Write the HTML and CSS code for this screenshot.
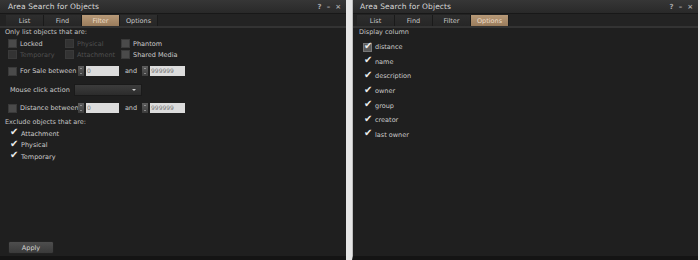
FILE: index.html
```html
<!DOCTYPE html>
<html lang="en">
<head>
    <meta charset="UTF-8">
    <title>Area Search for Objects</title>
    <link rel="stylesheet" href="styles.css">
</head>
<body>
    <div class="screens">
        <!-- Filter tab -->
        <div class="floater">
            <div class="titlebar">
                <span class="title">Area Search for Objects</span>
                <span class="tools"><span>?</span><span>&#8211;</span><span>&#215;</span></span>
            </div>
            <div class="tabs">
                <span class="tab">List</span>
                <span class="tab">Find</span>
                <span class="tab active">Filter</span>
                <span class="tab">Options</span>
            </div>
            <div class="body">
                <div class="label">Only list objects that are:</div>
                <div class="grid3">
                    <label class="cb"><i class="box"></i>Locked</label>
                    <label class="cb off"><i class="box"></i>Physical</label>
                    <label class="cb"><i class="box"></i>Phantom</label>
                    <label class="cb off"><i class="box"></i>Temporary</label>
                    <label class="cb off"><i class="box"></i>Attachment</label>
                    <label class="cb"><i class="box"></i>Shared Media</label>
                </div>
                <div class="range sale">
                    <label class="cb"><i class="box"></i>For Sale between</label>
                    <span class="spin"></span><span class="num">0</span>
                    <span class="and">and</span>
                    <span class="spin"></span><span class="num">999999</span>
                </div>
                <div class="combo-row">
                    <span>Mouse click action</span>
                    <span class="combo"></span>
                </div>
                <div class="range dist">
                    <label class="cb"><i class="box"></i>Distance between</label>
                    <span class="spin"></span><span class="num">0</span>
                    <span class="and">and</span>
                    <span class="spin"></span><span class="num">999999</span>
                </div>
                <div class="label">Exclude objects that are:</div>
                <div class="list">
                    <label class="cb"><i class="box on"></i>Attachment</label>
                    <label class="cb"><i class="box on"></i>Physical</label>
                    <label class="cb"><i class="box on"></i>Temporary</label>
                </div>
            </div>
            <div class="footer"><span class="btn">Apply</span></div>
        </div>

        <!-- Options tab -->
        <div class="floater right">
            <div class="titlebar">
                <span class="title">Area Search for Objects</span>
                <span class="tools"><span>?</span><span>&#8211;</span><span>&#215;</span></span>
            </div>
            <div class="tabs">
                <span class="tab">List</span>
                <span class="tab">Find</span>
                <span class="tab">Filter</span>
                <span class="tab active">Options</span>
            </div>
            <div class="body">
                <div class="label">Display column</div>
                <div class="columns">
                    <label class="cb"><i class="box on focus"></i>distance</label>
                    <label class="cb"><i class="box on"></i>name</label>
                    <label class="cb"><i class="box on"></i>description</label>
                    <label class="cb"><i class="box on"></i>owner</label>
                    <label class="cb"><i class="box on"></i>group</label>
                    <label class="cb"><i class="box on"></i>creator</label>
                    <label class="cb"><i class="box on"></i>last owner</label>
                </div>
            </div>
        </div>
    </div>
</body>
</html>
```

FILE: styles.css
```css
body {
    margin: 0;
    background: #e6e6e6;
    font-family: "DejaVu Sans", "Liberation Sans", sans-serif;
    font-size: 6.5px;
    color: #cccccc;
}

.screens {
    display: flex;
    gap: 6px;
    height: 260px;
}

.floater {
    width: 346px;
    height: 256px;
    background: #1f1f1f;
    border-bottom: 4px solid #141414;
    display: flex;
    flex-direction: column;
    position: relative;
}

.floater.right {
    width: 345px;
    border-left: 1px solid #bdbdbd;
}

.titlebar {
    height: 13px;
    display: flex;
    align-items: center;
    justify-content: space-between;
    padding: 0 5px 0 8px;
    background: linear-gradient(#363636, #292929);
    border-bottom: 1px solid #181818;
}

.right .titlebar {
    padding-left: 7px;
}

.title {
    font-size: 7.5px;
    color: #d8d8d8;
    letter-spacing: 0.1px;
}

.tools {
    display: flex;
    gap: 5px;
    color: #a8a8a8;
    font-size: 7px;
    font-weight: bold;
}

.tabs {
    display: flex;
    padding: 1px 6px 0;
    height: 11px;
    background: #232323;
    border-bottom: 2px solid #333;
}

.right .tabs {
    padding-left: 4px;
}

.tab {
    width: 37px;
    display: flex;
    align-items: center;
    justify-content: center;
    background: linear-gradient(#2e2e2e, #262626);
    border-right: 1px solid #1a1a1a;
    color: #c8c8c8;
}

.tab.active {
    background: linear-gradient(#b89a78, #9a7c5c);
    color: #ecdcc8;
}

.body {
    flex: 1;
    padding: 0 5px;
}

.right .body {
    padding-left: 6px;
}

.label {
    height: 9px;
    line-height: 9px;
    color: #c4c4c4;
}

.cb {
    display: flex;
    align-items: center;
    gap: 3px;
    height: 11px;
    white-space: nowrap;
}

.cb.off {
    color: #505050;
}

.box {
    width: 7px;
    height: 7px;
    background: #4a4a4a;
    border: 1px solid #3a3a3a;
    position: relative;
    flex: none;
}

.off .box {
    background: #333;
}

.box.on {
    background: none;
    border-color: transparent;
}

.box.on::after {
    content: "\2714";
    position: absolute;
    left: 0;
    top: -4px;
    font-size: 10px;
    color: #ececec;
}

.box.focus {
    background: #5a5a5a;
    border-color: #777;
}

.grid3 {
    display: grid;
    grid-template-columns: 57px 56px auto;
    padding: 1px 0 0 3px;
}

.range {
    display: flex;
    align-items: center;
    height: 12px;
    padding-left: 3px;
}

.sale {
    margin-top: 5px;
}

.range .cb {
    width: 70px;
}

.spin {
    width: 6px;
    height: 10px;
    background: linear-gradient(#5c5c5c, #3c3c3c);
    margin-right: 2px;
    position: relative;
}

.spin::before,
.spin::after {
    content: "";
    position: absolute;
    left: 2px;
    border: 1px solid transparent;
}

.spin::before {
    top: 1px;
    border-bottom-color: #ccc;
}

.spin::after {
    bottom: 1px;
    border-top-color: #ccc;
}

.num {
    width: 32px;
    height: 10px;
    line-height: 10px;
    padding-left: 1px;
    background: #dcdcdc;
    color: #777;
    font-size: 6px;
}

.range .num:last-child {
    width: 34px;
}

.and {
    width: 22px;
    text-align: center;
    margin-left: 1px;
}

.combo-row {
    display: flex;
    align-items: center;
    height: 12px;
    margin: 7px 0 6px;
    padding-left: 5px;
    gap: 4px;
}

.combo {
    width: 66px;
    height: 10px;
    background: linear-gradient(#3c3c3c, #2c2c2c);
    border: 1px solid #1a1a1a;
    position: relative;
}

.combo::after {
    content: "";
    position: absolute;
    right: 5px;
    top: 4px;
    border: 2px solid transparent;
    border-top-color: #cfcfcf;
}

.dist {
    margin-bottom: 4px;
}

.list {
    padding: 1px 0 0 4px;
}

.list .cb {
    height: 11.5px;
}

.footer {
    padding: 0 0 2px 8px;
}

.btn {
    display: inline-flex;
    justify-content: center;
    align-items: center;
    width: 44px;
    height: 11px;
    background: linear-gradient(#4e4e4e, #3a3a3a);
    border: 1px solid #222;
    border-radius: 2px;
    color: #d6d6d6;
}

.columns {
    padding: 3px 0 0 4px;
}

.columns .cb {
    height: 14.6px;
}
```
